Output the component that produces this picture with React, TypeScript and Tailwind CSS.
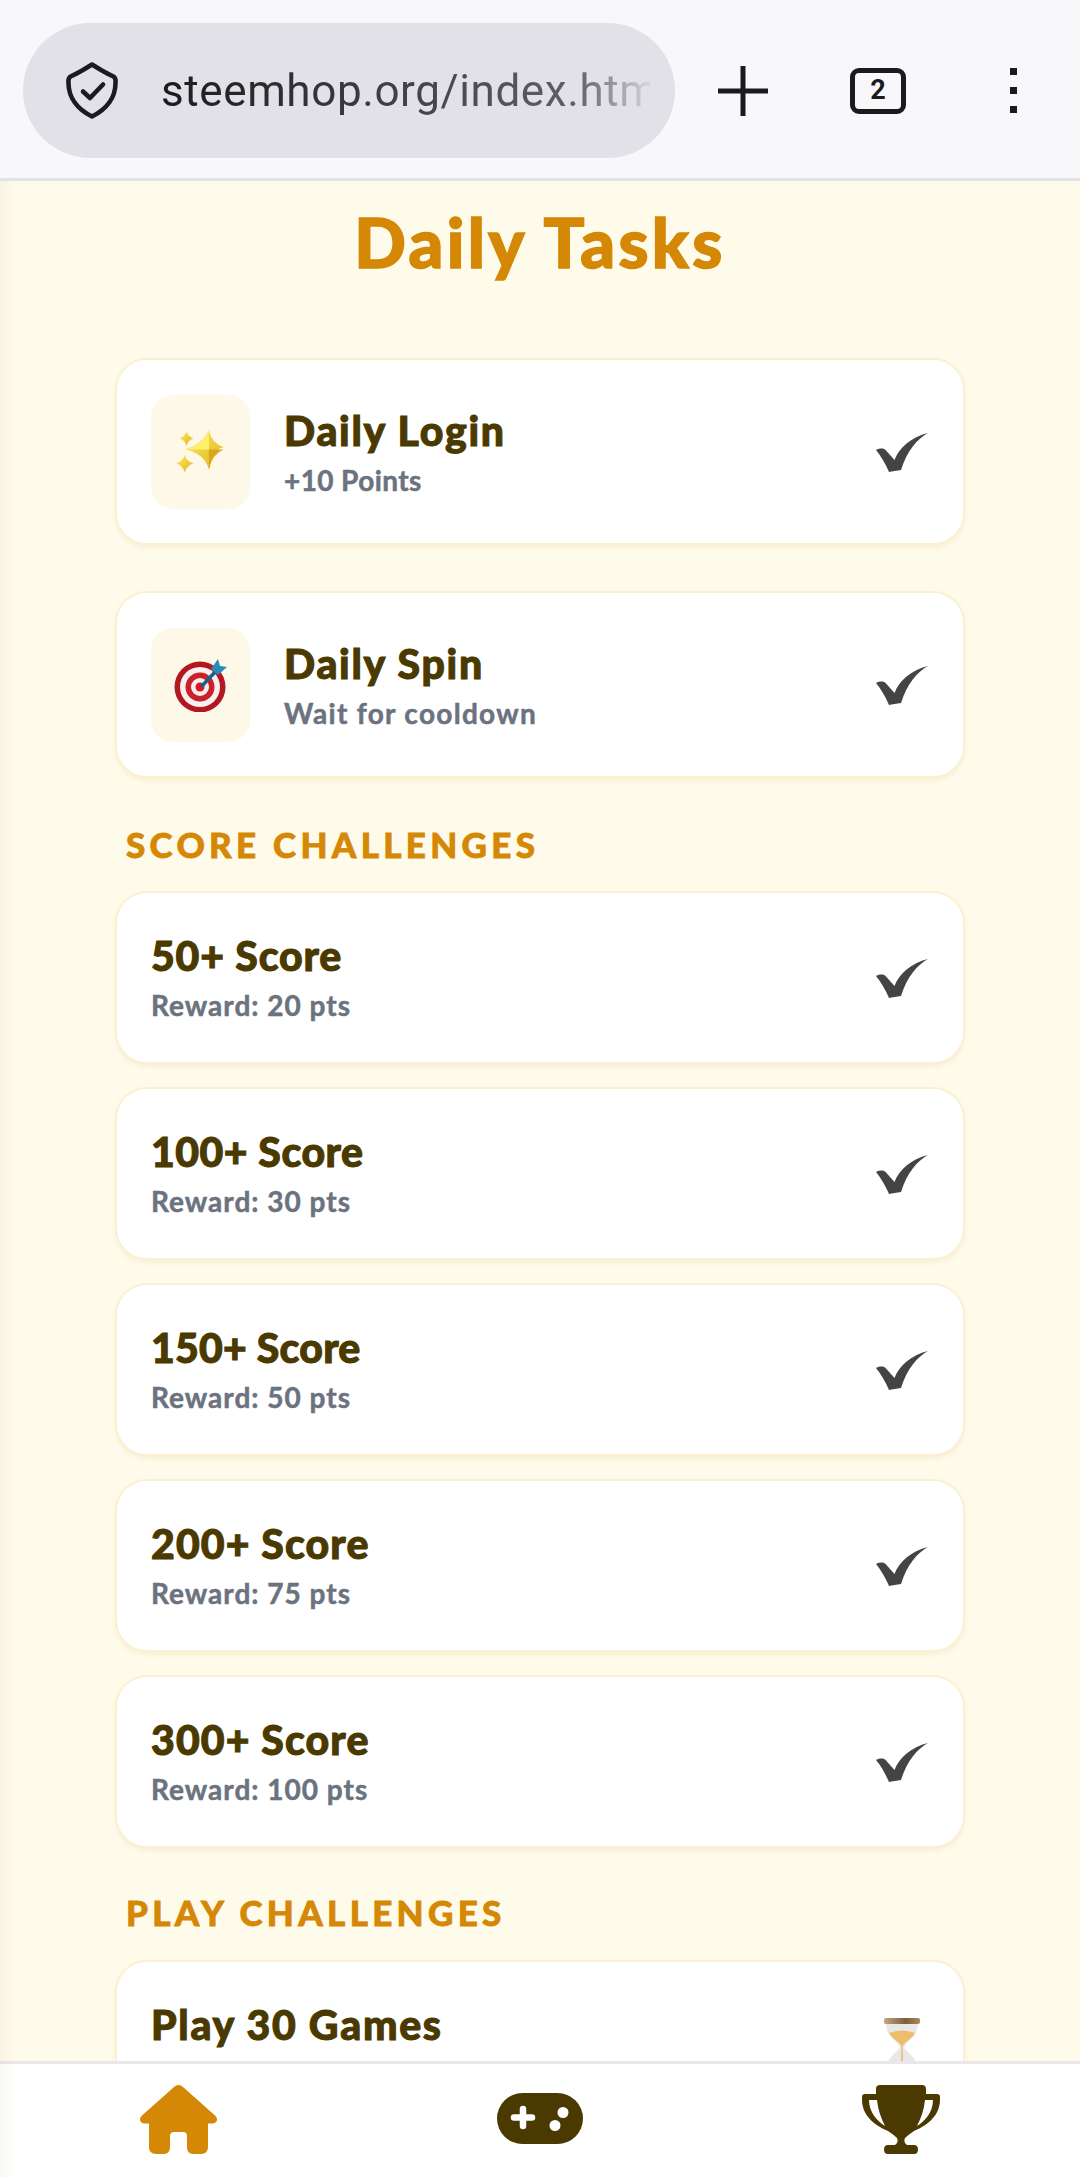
function Shield() {
  return (
    <svg width="52" height="57" viewBox="0 0 52 57" fill="none" stroke="#1b1b1f" strokeWidth="4.6" strokeLinecap="round" strokeLinejoin="round">
      <path d="M26 2.5 L35 8 Q42 12 47.5 14.5 Q50 16 49.5 21 C49.5 35 41 47 26 54.5 C11 47 2.5 35 2.5 21 Q2 16 4.500 14.500 Q10 12 17 8 Z" />
      <path d="M17 29.500 L24 36 L37 22.500" />
    </svg>
  );
}

function Check() {
  return (
    <svg className="mt-[2px]" width="52" height="39" viewBox="0 0 52 39">
      <path
        d="M0 17 C4 15 8 15 10 17.500 L18.500 27 C23 15 35 4 52 0 C41 6 31 18 25 37 C21 38 16 38 13 39 C9 30 5 23 0 17 Z"
        fill="#444444"
      />
    </svg>
  );
}

function Sparkles() {
  return (
    <svg className="mt-[2px] ml-[3px]" width="52" height="50" viewBox="0 0 60 58">
      <defs>
        <linearGradient id="sparkGold" x1="0" y1="0" x2="1" y2="1">
          <stop offset="0" stopColor="#fdeb5f" />
          <stop offset="1" stopColor="#e3b21c" />
        </linearGradient>
      </defs>
      <path d="M33 3 Q37 19 50 22 Q37 25 33 48 Q28 30 6 25 Q26 19 33 3 Z" transform="translate(5 0)" fill="url(#sparkGold)" />
      <path d="M38 3 L38 25 L11 25 Q31 20 38 3 Z" fill="#fdf06b" />
      <path d="M38 25 L38 48 Q42 30 55 25 Z" fill="#d9a81a" />
      <path d="M12 4 Q14 10 20 12 Q14 14 12 21 Q10 14 4 12 Q10 10 12 4 Z" fill="url(#sparkGold)" />
      <path d="M10 31 Q12 39 20 41 Q12 44 10 52 Q8 44 0 41 Q8 39 10 31 Z" fill="url(#sparkGold)" />
    </svg>
  );
}

function Target() {
  return (
    <svg width="54" height="54" viewBox="0 0 54 54">
      <circle cx="26" cy="29" r="25.500" fill="#b3171f" />
      <circle cx="26" cy="29" r="20" fill="#f6f1f0" />
      <circle cx="26" cy="29" r="14.500" fill="#c9202a" />
      <circle cx="26" cy="29" r="9" fill="#f4efee" />
      <circle cx="26" cy="29" r="4.500" fill="#e8121c" />
      <path d="M27 29 L42 13" stroke="#1d5f88" strokeWidth="3.500" />
      <path d="M37 11 L44 1 L46 8 L53 9 L44 17 Z" fill="#2a8bb5" />
    </svg>
  );
}

function Hourglass() {
  return (
    <svg className="mr-[8px]" width="36" height="58" viewBox="0 0 36 58">
      <defs>
        <linearGradient id="glassCap" x1="0" y1="0" x2="1" y2="0">
          <stop offset="0" stopColor="#c2a67c" />
          <stop offset="0.6" stopColor="#7d5f38" />
          <stop offset="1" stopColor="#a9895f" />
        </linearGradient>
      </defs>
      <path d="M2 6 C2 18 12 22 16 29 C12 36 2 40 2 52 L34 52 C34 40 24 36 20 29 C24 22 34 18 34 6 Z" fill="#e9e8e6" />
      <path d="M5 15 Q18 10 31 15 C28 21 21 23 18 29 C15 23 8 21 5 15 Z" fill="#eebd6c" />
      <path d="M17.500 28 L18.500 28 L19 50 L17 50 Z" fill="#e8b868" />
      <path d="M8 51 Q18 40 28 51 Z" fill="#eebd6c" />
      <rect x="0" y="0" width="36" height="6" rx="2" fill="url(#glassCap)" />
      <rect x="0" y="52" width="36" height="6" rx="2" fill="url(#glassCap)" />
    </svg>
  );
}

function HomeIcon() {
  return (
    <svg width="77" height="69" viewBox="0 0 77 69" fill="#d48806">
      <path d="M38.500 0 Q36 0 34 2 L2 30.500 Q-1.500 34 1 37 Q2.500 38.500 5 38.500 L9 38.500 L9 62 Q9 69 16 69 L24 69 Q30 69 30 62 L30 51 Q30 47 34 47 L43 47 Q47 47 47 51 L47 62 Q47 69 53 69 L61 69 Q68 69 68 62 L68 38.500 L72 38.500 Q74.500 38.500 76 37 Q78.500 34 75 30.500 L43 2 Q41 0 38.500 0 Z" />
    </svg>
  );
}

function GamepadIcon() {
  return (
    <svg width="86" height="51" viewBox="0 0 86 51">
      <rect width="86" height="51" rx="25.500" fill="#4a3900" />
      <path d="M26 16 L26 33 M17 24.500 L35 24.500" stroke="#ffffff" strokeWidth="6.500" strokeLinecap="round" />
      <circle cx="66" cy="19.500" r="5.500" fill="#ffffff" />
      <circle cx="58" cy="32.500" r="5.500" fill="#ffffff" />
    </svg>
  );
}

function TrophyIcon() {
  return (
    <svg width="78" height="69" viewBox="0 0 78 69" fill="#4a3900">
      <path d="M18 0 L60 0 Q64 0 64 4 L64 9 L75 9 Q78 9 78 12 L78 15 C78 29 67 40 52 46 Q46 50 43 53 Q41 57 45 60 L52 60 Q56 60 56 64.500 Q56 69 52 69 L26 69 Q22 69 22 64.500 Q22 60 26 60 L33 60 Q37 57 35 53 Q32 50 26 46 C11 40 0 29 0 15 L0 12 Q0 9 3 9 L14 9 L14 4 Q14 0 18 0 Z M7 15 C7 27 15 36 23 41 C19 33 16 25 15 15 Z M71 15 L63 15 C62 25 59 33 55 41 C63 36 71 27 71 15 Z" fillRule="evenodd" />
    </svg>
  );
}

function IconTile({ children }: { children: React.ReactNode }) {
  return (
    <div className="flex h-[114px] w-[99px] shrink-0 items-center justify-center rounded-[22px] bg-[#fdf8e8]">
      {children}
    </div>
  );
}

const titleText = 'text-[41px] leading-[48px] font-black text-[#4a3900] [-webkit-text-stroke:1px_#4a3900]';
const subText = 'text-[28px] leading-[34px] font-bold text-[#6b7280] [-webkit-text-stroke:0.5px_#6b7280]';

function TaskCard({ title, sub, icon, subTracking }: { title: string; sub: string; icon: React.ReactNode; subTracking: string }) {
  return (
    <div className="mb-[46px] flex h-[187px] items-center rounded-[32px] border-2 border-[#fbf1d2] bg-white pr-[35px] pl-[34px] shadow-[0_3px_5px_rgba(180,140,40,0.1)]">
      <IconTile>{icon}</IconTile>
      <div className="ml-[34px] flex-1">
        <div className={`${titleText} mt-[1px] tracking-[1.7px]`}>{title}</div>
        <div className={`${subText} mt-[8px] ${subTracking}`}>{sub}</div>
      </div>
      <Check />
    </div>
  );
}

function Challenge({ title, sub, icon, tracking }: { title: string; sub: string; icon?: React.ReactNode; tracking: string }) {
  return (
    <div className="mb-[23px] flex h-[173px] items-center justify-between rounded-[32px] border-2 border-[#fbf1d2] bg-white pr-[35px] pl-[34px] shadow-[0_3px_5px_rgba(180,140,40,0.1)]">
      <div>
        <div className={`${titleText} mt-[-1px] ${tracking}`}>{title}</div>
        <div className={`${subText} mt-[8px] tracking-[1px]`}>{sub}</div>
      </div>
      {icon ?? <Check />}
    </div>
  );
}

function SectionLabel({ children, className }: { children: string; className: string }) {
  return (
    <div className={`ml-[11px] text-[35px] leading-[40px] font-black tracking-[4.3px] text-[#d48806] [-webkit-text-stroke:0.8px_#d48806] ${className}`}>
      {children}
    </div>
  );
}

const scoreTasks = [
  { title: '50+ Score', sub: 'Reward: 20 pts', tracking: 'tracking-[0.8px]' },
  { title: '100+ Score', sub: 'Reward: 30 pts', tracking: 'tracking-[0.5px]' },
  { title: '150+ Score', sub: 'Reward: 50 pts', tracking: 'tracking-[0.2px]' },
  { title: '200+ Score', sub: 'Reward: 75 pts', tracking: 'tracking-[1.1px]' },
  { title: '300+ Score', sub: 'Reward: 100 pts', tracking: 'tracking-[1.1px]' },
];

export default function App() {
  return (
    <div className="relative flex h-[2177px] w-[1080px] flex-col overflow-hidden bg-[#fffbeb] [font-family:Lato,sans-serif]">
      {/* browser chrome */}
      <header className="flex h-[181px] shrink-0 items-center border-b-[3px] border-[#e2e2e8] bg-[#f8f8fb] pt-[3px]">
        <div className="ml-[23px] flex h-[135px] w-[652px] items-center rounded-[68px] bg-[#e1e1e7] pl-[43px]">
          <Shield />
          <div className="ml-[43px] w-[489px] overflow-hidden bg-gradient-to-r from-[#1b1b1f] from-0% via-[#5f5f66] via-[85%] to-[#d5d5da] bg-clip-text text-[44px] leading-[56px] tracking-[0.6px] whitespace-nowrap text-transparent [font-family:Roboto,sans-serif]">
            steemhop.org/index.html
          </div>
        </div>
        <div className="ml-[43px] flex h-[50px] w-[50px] items-center justify-center">
          <svg width="50" height="50" viewBox="0 0 50 50" stroke="#1b1b1f" strokeWidth="5">
            <path d="M25 0 V50 M0 25 H50" />
          </svg>
        </div>
        <div className="ml-[82px] flex h-[46px] w-[56px] items-center justify-center rounded-[9px] border-[5px] border-[#1b1b1f] text-[27px] font-bold text-[#1b1b1f] [font-family:Roboto,sans-serif]">
          2
        </div>
        <div className="ml-[104px] flex flex-col gap-[12px]">
          <span className="h-[7px] w-[7px] bg-[#1b1b1f]" />
          <span className="h-[7px] w-[7px] bg-[#1b1b1f]" />
          <span className="h-[7px] w-[7px] bg-[#1b1b1f]" />
        </div>
      </header>

      <main className="min-h-0 flex-1 overflow-hidden px-[115px]">
        <h1 className="mt-[21px] mb-[76px] text-center text-[68px] leading-[80px] font-black tracking-[3.3px] text-[#d48806] [-webkit-text-stroke:1.5px_#d48806]">
          Daily Tasks
        </h1>
        <TaskCard title="Daily Login" sub="+10 Points" icon={<Sparkles />} subTracking="tracking-[0.4px]" />
        <TaskCard title="Daily Spin" sub="Wait for cooldown" icon={<Target />} subTracking="tracking-[1.3px]" />
        <SectionLabel className="mt-[3px] mb-[27px]">SCORE CHALLENGES</SectionLabel>
        {scoreTasks.map((task) => (
          <Challenge key={task.title} title={task.title} sub={task.sub} tracking={task.tracking} />
        ))}
        <SectionLabel className="mt-[44px] mb-[28px]">PLAY CHALLENGES</SectionLabel>
        <Challenge title="Play 30 Games" sub="Reward: 20 pts" icon={<Hourglass />} tracking="tracking-[1.7px]" />
      </main>

      <nav className="flex h-[116px] shrink-0 items-start justify-between border-t-[3px] border-[#e8e8ea] bg-white pt-[21px] pr-[140px] pl-[140px]">
        <HomeIcon />
        <div className="mt-[8px]">
          <GamepadIcon />
        </div>
        <TrophyIcon />
      </nav>

      {/* faint shade down the left edge */}
      <div className="pointer-events-none absolute top-[181px] bottom-0 left-0 w-[16px] bg-gradient-to-r from-[rgba(120,100,40,0.05)] to-transparent" />
    </div>
  );
}
